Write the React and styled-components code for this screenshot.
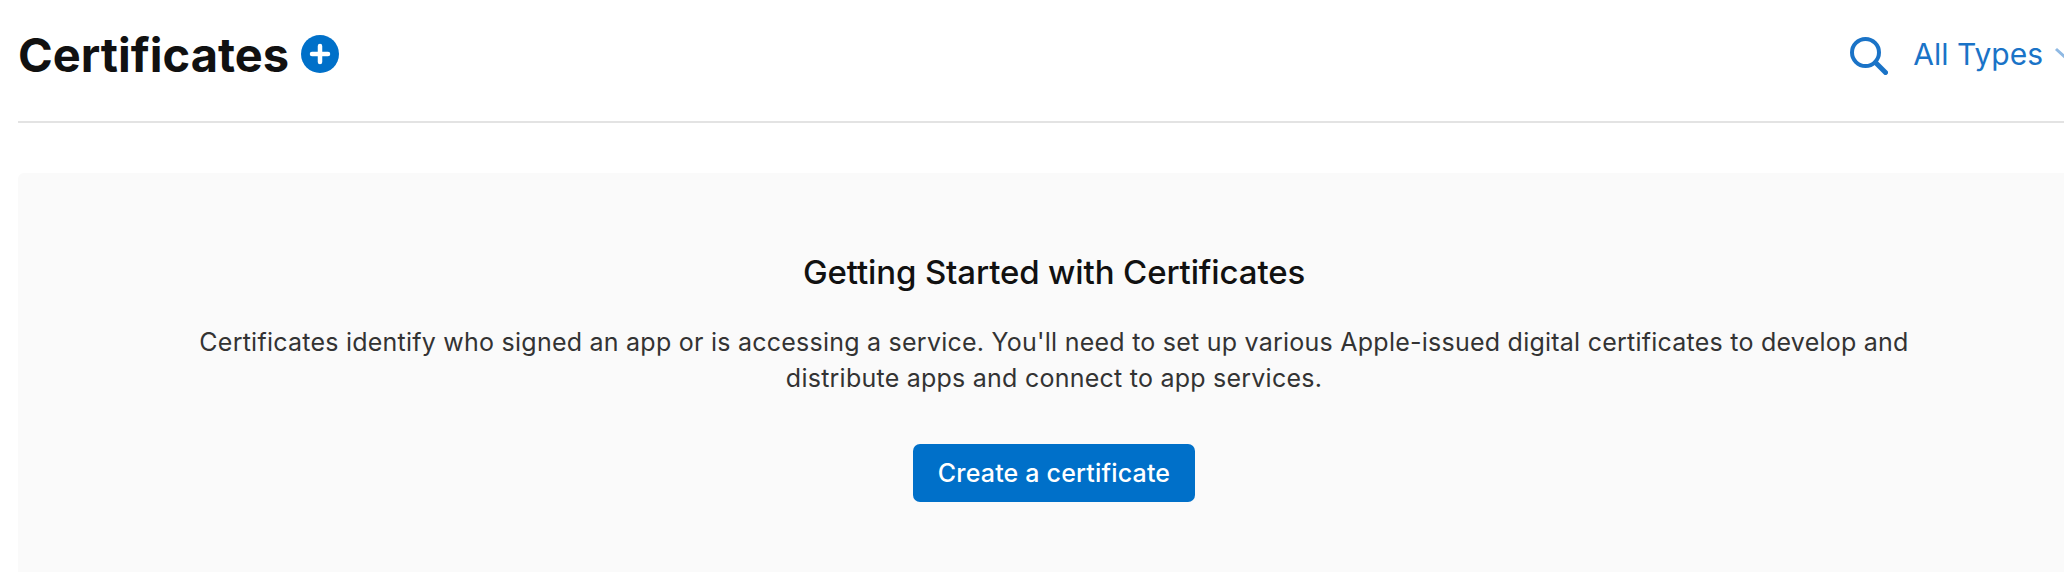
import React from "react";
import styled, { createGlobalStyle } from "styled-components";

const GlobalStyle = createGlobalStyle`
  html, body {
    margin: 0;
    padding: 0;
    height: 572px;
    overflow: hidden;
    background: #fff;
    font-family: Inter, "Liberation Sans", sans-serif;
  }
`;

const Page = styled.div`
  width: 2072px;
  height: 572px;
  padding-left: 18px;
  overflow: hidden;
`;

const Header = styled.header`
  height: 121px;
  display: flex;
  align-items: flex-start;
  justify-content: space-between;
  border-bottom: 2px solid #e3e3e3;
`;

const TitleRow = styled.div`
  display: flex;
  align-items: center;
  gap: 12px;
  height: 108px;
`;

const Title = styled.h1`
  margin: 0;
  font-size: 47px;
  font-weight: 700;
  color: #111;
  line-height: 1;
`;

const AddButton = styled.button`
  width: 38px;
  height: 38px;
  border: 0;
  padding: 0;
  border-radius: 50%;
  background: #0070c9;
  display: flex;
  align-items: center;
  justify-content: center;
`;

const Filters = styled.div`
  display: flex;
  align-items: center;
  gap: 25px;
  height: 108px;
  padding-right: 12px;
`;

const SearchButton = styled.button`
  border: 0;
  padding: 0;
  background: none;
  display: flex;
  margin-top: 4px;
`;

const TypeSelect = styled.div`
  display: flex;
  align-items: center;
  gap: 11px;
  font-size: 30px;
  color: #1a73c7;
`;

const Panel = styled.section`
  margin-top: 50px;
  height: 400px;
  background: #fafafa;
  border-radius: 6px 0 0 0;
  display: flex;
  flex-direction: column;
  align-items: center;
  padding-top: 79px;
  box-sizing: border-box;
`;

const PanelTitle = styled.h2`
  margin: 0;
  font-size: 33px;
  font-weight: 500;
  letter-spacing: -0.13px;
  color: #111;
  line-height: 40px;
`;

const PanelText = styled.p`
  margin: 32px 0 0;
  width: 1760px;
  font-size: 25px;
  letter-spacing: 0.24px;
  line-height: 36px;
  text-align: center;
  color: #333;
`;

const CreateButton = styled.button`
  margin-top: 48px;
  width: 282px;
  height: 58px;
  border: 0;
  border-radius: 7px;
  background: #0070c9;
  color: #fff;
  font: 500 25px Inter, "Liberation Sans", sans-serif;
  letter-spacing: 0.18px;
`;

export default function App() {
  return (
    <Page>
      <GlobalStyle />
      <Header>
        <TitleRow>
          <Title>Certificates</Title>
          <AddButton aria-label="Add">
            <svg width="22" height="22" viewBox="0 0 22 22">
              <path d="M11 3v16M3 11h16" stroke="#fff" strokeWidth="4.5" strokeLinecap="round" />
            </svg>
          </AddButton>
        </TitleRow>
        <Filters>
          <SearchButton aria-label="Search">
            <svg width="38" height="38" viewBox="0 0 38 38" fill="none" stroke="#1a73c7" strokeLinecap="round">
              <circle cx="15.5" cy="15.5" r="13.5" strokeWidth="4" />
              <path d="M25.5 25.5l10 10" strokeWidth="5" />
            </svg>
          </SearchButton>
          <TypeSelect>
            All Types
            <svg width="24" height="14" viewBox="0 0 24 14" fill="none" stroke="#8fb9e3" strokeWidth="3">
              <path d="M2 2l10 9 10-9" />
            </svg>
          </TypeSelect>
        </Filters>
      </Header>
      <Panel>
        <PanelTitle>Getting Started with Certificates</PanelTitle>
        <PanelText>
          Certificates identify who signed an app or is accessing a service. You'll need to set up various Apple-issued digital certificates to develop and distribute apps and connect to app services.
        </PanelText>
        <CreateButton>Create a certificate</CreateButton>
      </Panel>
    </Page>
  );
}
